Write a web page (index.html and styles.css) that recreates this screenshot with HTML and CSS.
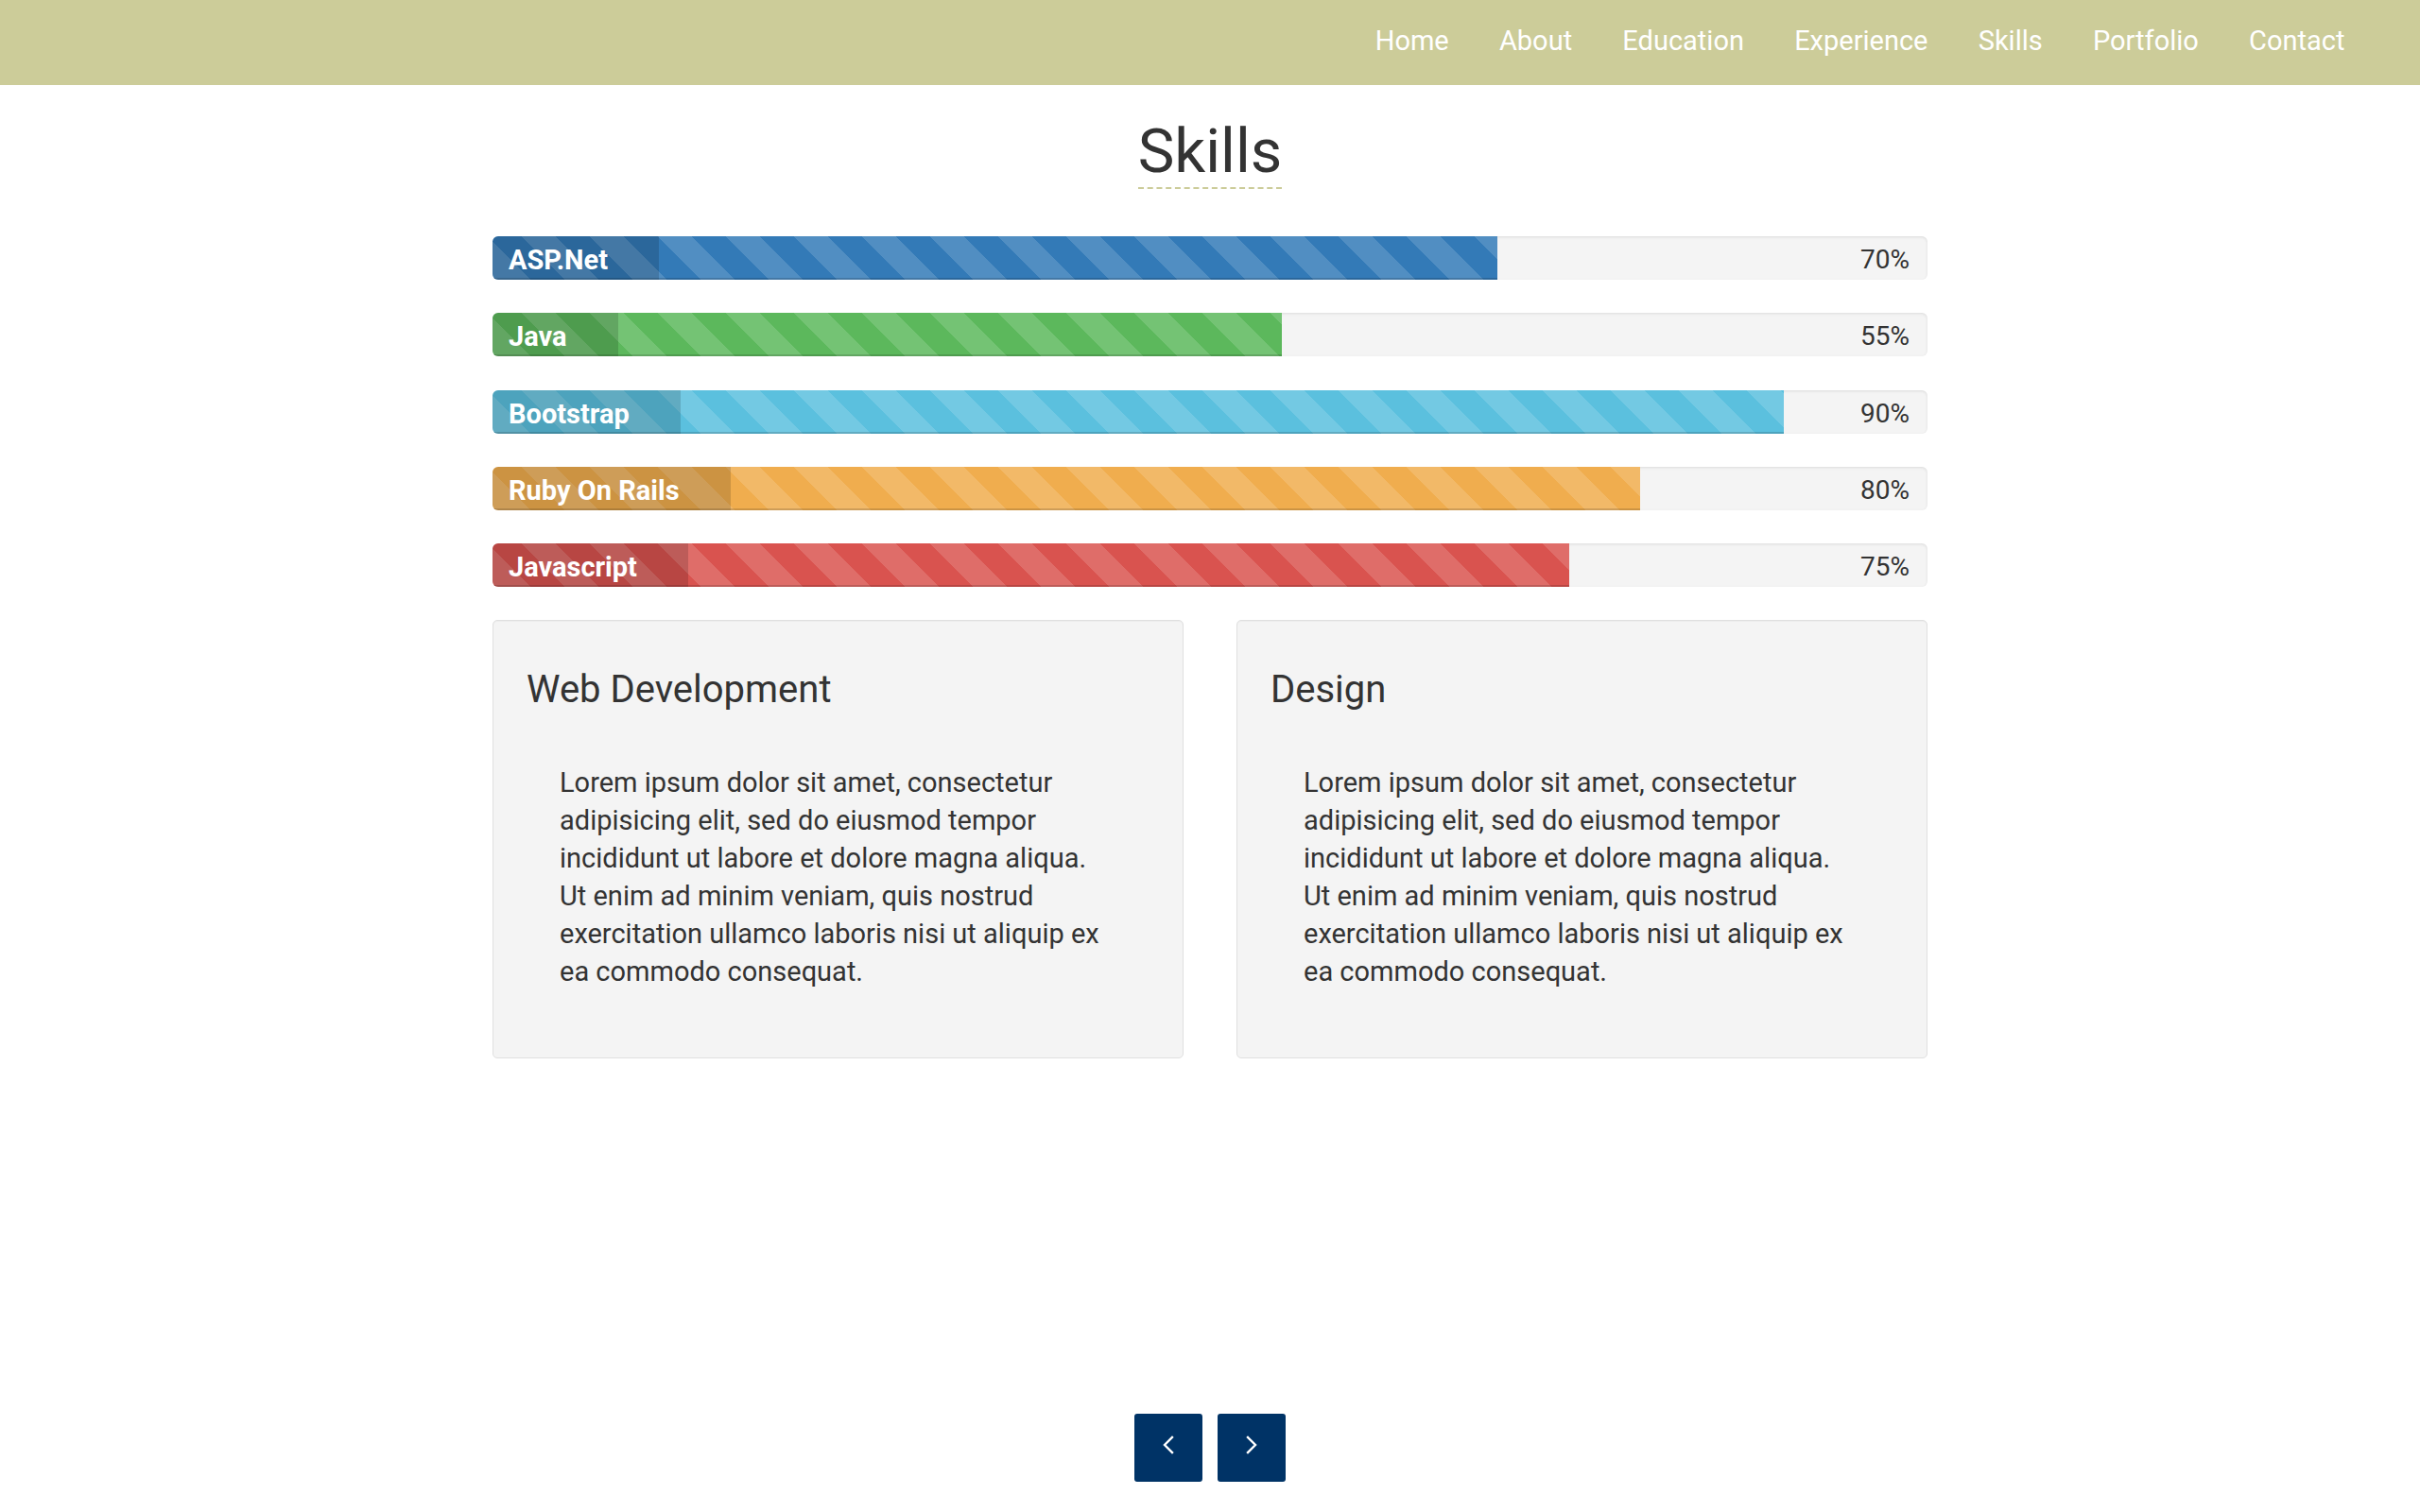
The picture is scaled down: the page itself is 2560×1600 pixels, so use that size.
FILE: index.html
```html
<!DOCTYPE html>
<html lang="en">
<head>
<meta charset="utf-8">
<title>Skills</title>
<link rel="stylesheet" href="styles.css">
</head>
<body>
<header class="navbar">
  <ul class="nav">
    <li><a href="#">Home</a></li>
    <li><a href="#">About</a></li>
    <li><a href="#">Education</a></li>
    <li><a href="#">Experience</a></li>
    <li><a href="#">Skills</a></li>
    <li><a href="#">Portfolio</a></li>
    <li><a href="#">Contact</a></li>
  </ul>
</header>
<main class="page">
  <section class="skills">
    <div class="title-wrap"><h2 class="title">Skills</h2></div>
    <div class="bars">
      <div class="progress"><div class="bar bar-primary" style="width:70%"><span class="bar-label">ASP.Net</span></div><span class="pct">70%</span></div>
      <div class="progress"><div class="bar bar-success" style="width:55%"><span class="bar-label">Java</span></div><span class="pct">55%</span></div>
      <div class="progress"><div class="bar bar-info" style="width:90%"><span class="bar-label">Bootstrap</span></div><span class="pct">90%</span></div>
      <div class="progress"><div class="bar bar-warning" style="width:80%"><span class="bar-label">Ruby On Rails</span></div><span class="pct">80%</span></div>
      <div class="progress"><div class="bar bar-danger" style="width:75%"><span class="bar-label">Javascript</span></div><span class="pct">75%</span></div>
    </div>
    <div class="cards">
      <div class="card">
        <h3 class="card-title">Web Development</h3>
        <p class="card-text">Lorem ipsum dolor sit amet, consectetur adipisicing elit, sed do eiusmod tempor incididunt ut labore et dolore magna aliqua. Ut enim ad minim veniam, quis nostrud exercitation ullamco laboris nisi ut aliquip ex ea commodo consequat.</p>
      </div>
      <div class="card">
        <h3 class="card-title">Design</h3>
        <p class="card-text">Lorem ipsum dolor sit amet, consectetur adipisicing elit, sed do eiusmod tempor incididunt ut labore et dolore magna aliqua. Ut enim ad minim veniam, quis nostrud exercitation ullamco laboris nisi ut aliquip ex ea commodo consequat.</p>
      </div>
    </div>
  </section>
  <nav class="pager">
    <a href="#" class="pager-btn" aria-label="Previous"><svg width="12" height="20" viewBox="0 0 12 20"><polyline points="10,2 2,10 10,18" fill="none" stroke="#fff" stroke-width="2.4" stroke-linecap="square"/></svg></a>
    <a href="#" class="pager-btn" aria-label="Next"><svg width="12" height="20" viewBox="0 0 12 20"><polyline points="2,2 10,10 2,18" fill="none" stroke="#fff" stroke-width="2.4" stroke-linecap="square"/></svg></a>
  </nav>
</main>
</body>
</html>
```
FILE: styles.css
```css
* { box-sizing: border-box; }

html, body {
  margin: 0;
  padding: 0;
}

body {
  font-family: Roboto, "Liberation Sans", Arial, sans-serif;
  color: #333;
  background: #fff;
  min-height: 100vh;
  display: flex;
  flex-direction: column;
}

/* ---------- navbar ---------- */
.navbar {
  height: 90px;
  background: #cccc99;
  display: flex;
  justify-content: flex-end;
  padding-right: 53px;
}

.nav {
  list-style: none;
  margin: 0;
  padding: 0;
  display: flex;
}

.nav a {
  display: block;
  padding: 0 26.6px 4px;
  line-height: 86px;
  font-size: 29px;
  color: #fff;
  text-decoration: none;
}

/* ---------- page ---------- */
.page {
  flex: 1;
  display: flex;
  flex-direction: column;
}

.skills {
  width: 1518px;
  margin: 0 auto;
}

.title-wrap {
  text-align: center;
  margin-top: 34px;
}

.title {
  display: inline-block;
  margin: 0;
  font-size: 65px;
  font-weight: 400;
  line-height: 72px;
  padding-bottom: 2px;
  border-bottom: 2px dashed #cccc99;
  color: #333;
}

/* ---------- progress bars ---------- */
.bars {
  margin-top: 50px;
  display: flex;
  flex-direction: column;
  gap: 35.25px;
}

.progress {
  height: 46px;
  display: flex;
  align-items: stretch;
  background: #f4f4f4;
  border-radius: 6px;
  box-shadow: inset 0 1px 3px rgba(0, 0, 0, 0.1);
  overflow: hidden;
}

.bar {
  display: flex;
  height: 100%;
  box-shadow: inset 0 -2px 0 rgba(0, 0, 0, 0.15);
  background-image: linear-gradient(45deg,
    rgba(255, 255, 255, 0.15) 25%, transparent 25%,
    transparent 50%, rgba(255, 255, 255, 0.15) 50%,
    rgba(255, 255, 255, 0.15) 75%, transparent 75%, transparent);
  background-size: 72px 72px;
  background-position: 30px 0;
}

.bar-primary { background-color: #337ab7; }
.bar-success { background-color: #5cb85c; }
.bar-info    { background-color: #5bc0de; }
.bar-warning { background-color: #f0ad4e; }
.bar-danger  { background-color: #d9534f; }

.bar-label {
  display: block;
  padding: 4px 54px 0 17px;
  line-height: 42px;
  font-size: 29px;
  font-weight: 700;
  color: #fff;
  white-space: nowrap;
  background: rgba(0, 0, 0, 0.15);
  border-radius: 6px 0 0 6px;
}

.pct {
  margin-left: auto;
  padding: 4px 19px 0 0;
  line-height: 42px;
  font-size: 28px;
  color: #333;
}

/* ---------- cards ---------- */
.cards {
  margin-top: 35px;
  display: grid;
  grid-template-columns: 1fr 1fr;
  gap: 56px;
}

.card {
  background: #f4f4f4;
  border: 1px solid #e0e0e0;
  border-radius: 5px;
  padding: 51px 34px 71px 35px;
  box-shadow: inset 0 1px 1px rgba(0, 0, 0, 0.03);
}

.card-title {
  margin: 0;
  font-size: 40px;
  font-weight: 400;
  line-height: 44px;
  color: #333;
}

.card-text {
  margin: 56px 0 0 35px;
  max-width: 580px;
  font-size: 29px;
  line-height: 40px;
  color: #333;
}

/* ---------- pager ---------- */
.pager {
  margin-top: auto;
  padding-bottom: 32px;
  display: flex;
  justify-content: center;
  gap: 16px;
}

.pager-btn {
  width: 72px;
  height: 72px;
  background: #003366;
  border-radius: 3px;
  display: flex;
  align-items: center;
  justify-content: center;
  padding-bottom: 6px;
}

.pager-btn svg { display: block; }
```
